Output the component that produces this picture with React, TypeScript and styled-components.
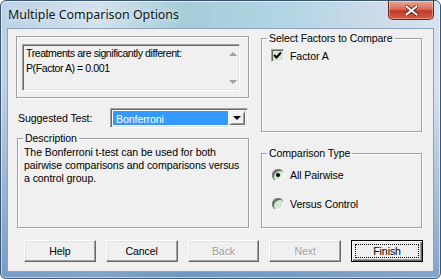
import styled, { createGlobalStyle } from 'styled-components';

const GlobalStyle = createGlobalStyle`
  html, body {
    margin: 0;
    padding: 0;
    background: #ffffff;
  }
  body {
    width: 441px;
    height: 279px;
    overflow: hidden;
  }
`;

const UI_FONT = `'Liberation Sans', Arial, sans-serif`;

const Window = styled.div`
  box-sizing: border-box;
  width: 441px;
  height: 279px;
  border: 1px solid #3b5671;
  border-radius: 6px;
  display: flex;
  flex-direction: column;
  font-family: ${UI_FONT};
  font-size: 10.6px;
  letter-spacing: -0.1px;
  color: #000;
  background:
    linear-gradient(180deg, rgba(255,255,255,0) 0%, rgba(255,255,255,0) 30%, rgba(60,110,170,0.55) 100%),
    linear-gradient(90deg, #bcd1e7 0%, #d3e1ee 22%, #a4cdd8 42%, #b3d6e4 66%, #cddbea 86%, #d8e2ee 100%);
  box-shadow: inset 0 0 0 1px rgba(255,255,255,0.55);
`;

const TitleBar = styled.div`
  height: 27px;
  display: flex;
  align-items: flex-start;
  padding-left: 7px;
`;

const Title = styled.div`
  font-family: 'Noto Sans', 'Open Sans', sans-serif;
  font-size: 12.4px;
  letter-spacing: 0;
  line-height: 28px;
  color: #101820;
  text-shadow: 0 0 6px rgba(255,255,255,0.9);
`;

const CloseButton = styled.div`
  margin-left: auto;
  margin-right: 6px;
  width: 46px;
  height: 19px;
  box-sizing: border-box;
  border: 1px solid #6b241a;
  border-top: none;
  border-radius: 0 0 5px 5px;
  background: linear-gradient(180deg, #e9a898 0%, #d86c55 45%, #c0392a 55%, #d65a40 100%);
  box-shadow: inset 0 0 0 1px rgba(255,255,255,0.35);
  display: flex;
  align-items: center;
  justify-content: center;
`;

const Client = styled.div`
  flex: 1;
  margin: 0 6px 6px;
  box-sizing: border-box;
  border: 1px solid #8ba2ba;
  background: #f0f0f0;
  display: flex;
  flex-direction: column;
  padding: 3px 10px 0 8px;
`;

const Columns = styled.div`
  display: grid;
  grid-template-columns: 233px 161px;
  column-gap: 12px;
`;

const Column = styled.div<{ $top?: number }>`
  display: flex;
  flex-direction: column;
  margin-top: ${p => p.$top ?? 0}px;
`;

const ResultsBox = styled.div`
  box-sizing: border-box;
  height: 62px;
  border: 1px solid #a0a0a0;
  box-shadow: inset 1px 1px 0 #fff, 1px 1px 0 #fff;
  padding: 7px 8px 0 5px;
`;

const Sunken = styled.div`
  box-sizing: border-box;
  border: 1px solid;
  border-color: #a0a0a0 #fff #fff #a0a0a0;
  box-shadow: inset 1px 1px 0 #696969, inset -1px -1px 0 #e3e3e3;
`;

const ResultsText = styled(Sunken)`
  height: 47px;
  display: flex;
  background: #f0f0f0;
`;

const ResultsLines = styled.div`
  flex: 1;
  padding: 1px 0 0 3px;
  line-height: 15px;
  letter-spacing: -0.45px;
`;

const ScrollColumn = styled.div`
  width: 13px;
  display: flex;
  flex-direction: column;
  justify-content: space-between;
  align-items: center;
  padding: 7px 0 6px;
`;

const Arrow = styled.div<{ $down?: boolean; $color?: string }>`
  width: 0;
  height: 0;
  border-left: 4px solid transparent;
  border-right: 4px solid transparent;
  ${p => p.$down
    ? `border-top: 4px solid ${p.$color ?? '#a0a0a0'};`
    : `border-bottom: 4px solid ${p.$color ?? '#a0a0a0'};`}
`;

const SuggestRow = styled.div`
  margin-top: 10px;
  height: 20px;
  display: flex;
  align-items: center;
  padding-left: 2px;
`;

const Label = styled.span`
  width: 92px;
`;

const Combo = styled(Sunken)`
  width: 138px;
  height: 20px;
  background: #fff;
  display: flex;
  padding: 2px;
`;

const ComboValue = styled.div`
  flex: 1;
  margin-right: 1px;
  background: #3399ff;
  color: #fff;
  padding-left: 3px;
  line-height: 16px;
`;

const DropButton = styled.div`
  width: 16px;
  box-sizing: border-box;
  background: #f0f0f0;
  border: 1px solid;
  border-color: #f0f0f0 #696969 #696969 #f0f0f0;
  box-shadow: inset 1px 1px 0 #fff, inset -1px -1px 0 #a0a0a0;
  display: flex;
  align-items: center;
  justify-content: center;
`;

const Group = styled.fieldset<{ $h: number; $mt?: number; $ml?: number }>`
  box-sizing: border-box;
  margin: ${p => p.$mt ?? 0}px 0 0 ${p => p.$ml ?? 0}px;
  padding: 0;
  min-width: 0;
  height: ${p => p.$h}px;
  border: 1px solid #a0a0a0;
  box-shadow: inset 1px 1px 0 #fff, 1px 1px 0 #fff;
`;

const Legend = styled.legend`
  margin-left: 5px;
  padding: 0 2px;
  line-height: 13px;
`;

const Description = styled.div`
  padding: 1px 2px 0 6px;
  line-height: 13px;
`;

const OptionRow = styled.div<{ $mt: number }>`
  display: flex;
  align-items: center;
  height: 13px;
  margin: ${p => p.$mt}px 0 0 9px;
  gap: 6px;
`;

const CheckBox = styled.div`
  box-sizing: border-box;
  width: 13px;
  height: 13px;
  border: 1px solid;
  border-color: #a0a0a0 #fff #fff #a0a0a0;
  box-shadow: inset 1px 1px 0 #696969, inset -1px -1px 0 #e3e3e3;
  background: #cfeccf;
  display: flex;
  align-items: center;
  justify-content: center;
`;

const Radio = styled.div<{ $on?: boolean }>`
  box-sizing: border-box;
  width: 12px;
  height: 12px;
  margin-left: 1px;
  border-radius: 50%;
  background: #cfeccf;
  box-shadow: inset 1px 1px 0 #808080, inset 2px 2px 0 #696969, inset -1px -1px 0 #fff, inset -2px -2px 0 #e3e3e3;
  display: flex;
  align-items: center;
  justify-content: center;
  &::after {
    content: '';
    width: 4px;
    height: 4px;
    border-radius: 50%;
    background: ${p => (p.$on ? '#000' : 'transparent')};
  }
`;

const ButtonRow = styled.div`
  margin-top: 12px;
  display: flex;
  gap: 10px;
  padding-left: 8px;
`;

const Button = styled.div<{ $default?: boolean; $disabled?: boolean }>`
  box-sizing: border-box;
  width: 74px;
  height: 22px;
  background: #f0f0f0;
  display: flex;
  padding: ${p => (p.$default ? '3px' : '2px')};
  border: 1px solid;
  border-color: ${p => (p.$default ? '#000' : '#fff #696969 #696969 #fff')};
  box-shadow: ${p => (p.$default
    ? 'inset 1px 1px 0 #fff, inset -1px -1px 0 #696969, inset -2px -2px 0 #a0a0a0'
    : 'inset -1px -1px 0 #a0a0a0, inset 1px 1px 0 #e3e3e3')};
  color: ${p => (p.$disabled ? '#a0a0a0' : '#000')};
  text-shadow: ${p => (p.$disabled ? '1px 1px 0 #fff' : 'none')};
`;

const ButtonFace = styled.span<{ $focused?: boolean }>`
  flex: 1;
  display: flex;
  align-items: center;
  justify-content: center;
  border: 1px ${p => (p.$focused ? 'dotted #000' : 'solid transparent')};
`;

const buttons = [
  { label: 'Help' },
  { label: 'Cancel' },
  { label: 'Back', disabled: true },
  { label: 'Next', disabled: true },
  { label: 'Finish', def: true },
];

const App = () => {
  return (
    <>
      <GlobalStyle />
      <Window>
        <TitleBar>
          <Title>Multiple Comparison Options</Title>
          <CloseButton>
            <svg width="13" height="11" viewBox="0 0 13 11">
              <path d="M1.5 1.5 L11.5 9.5 M11.5 1.5 L1.5 9.5" stroke="#4a1a12" strokeWidth="3.6" strokeLinecap="square" />
              <path d="M1.5 1.5 L11.5 9.5 M11.5 1.5 L1.5 9.5" stroke="#fff" strokeWidth="2" strokeLinecap="square" />
            </svg>
          </CloseButton>
        </TitleBar>
        <Client>
          <Columns>
            <Column $top={4}>
              <ResultsBox>
                <ResultsText>
                  <ResultsLines>
                    Treatments are significantly different:<br />
                    P(Factor A) = 0.001
                  </ResultsLines>
                  <ScrollColumn>
                    <Arrow />
                    <Arrow $down />
                  </ScrollColumn>
                </ResultsText>
              </ResultsBox>
              <SuggestRow>
                <Label>Suggested Test:</Label>
                <Combo>
                  <ComboValue>Bonferroni</ComboValue>
                  <DropButton>
                    <Arrow $down $color="#000" />
                  </DropButton>
                </Combo>
              </SuggestRow>
              <Group $h={96} $mt={4} $ml={1}>
                <Legend>Description</Legend>
                <Description>
                  The Bonferroni t-test can be used for both<br />
                  pairwise comparisons and comparisons versus<br />
                  a control group.
                </Description>
              </Group>
            </Column>
            <Column>
              <Group $h={100}>
                <Legend>Select Factors to Compare</Legend>
                <OptionRow $mt={4}>
                  <CheckBox>
                    <svg width="9" height="9" viewBox="0 0 9 9">
                      <path d="M1 4 L3.5 6.5 L8 1.5" stroke="#000" strokeWidth="2" fill="none" />
                    </svg>
                  </CheckBox>
                  <span>Factor A</span>
                </OptionRow>
              </Group>
              <Group $h={81} $mt={15}>
                <Legend>Comparison Type</Legend>
                <OptionRow $mt={8}>
                  <Radio $on />
                  <span>All Pairwise</span>
                </OptionRow>
                <OptionRow $mt={16}>
                  <Radio />
                  <span>Versus Control</span>
                </OptionRow>
              </Group>
            </Column>
          </Columns>
          <ButtonRow>
            {buttons.map(b => (
              <Button key={b.label} $default={b.def} $disabled={b.disabled}>
                <ButtonFace $focused={b.def}>{b.label}</ButtonFace>
              </Button>
            ))}
          </ButtonRow>
        </Client>
      </Window>
    </>
  );
};

export default App;
